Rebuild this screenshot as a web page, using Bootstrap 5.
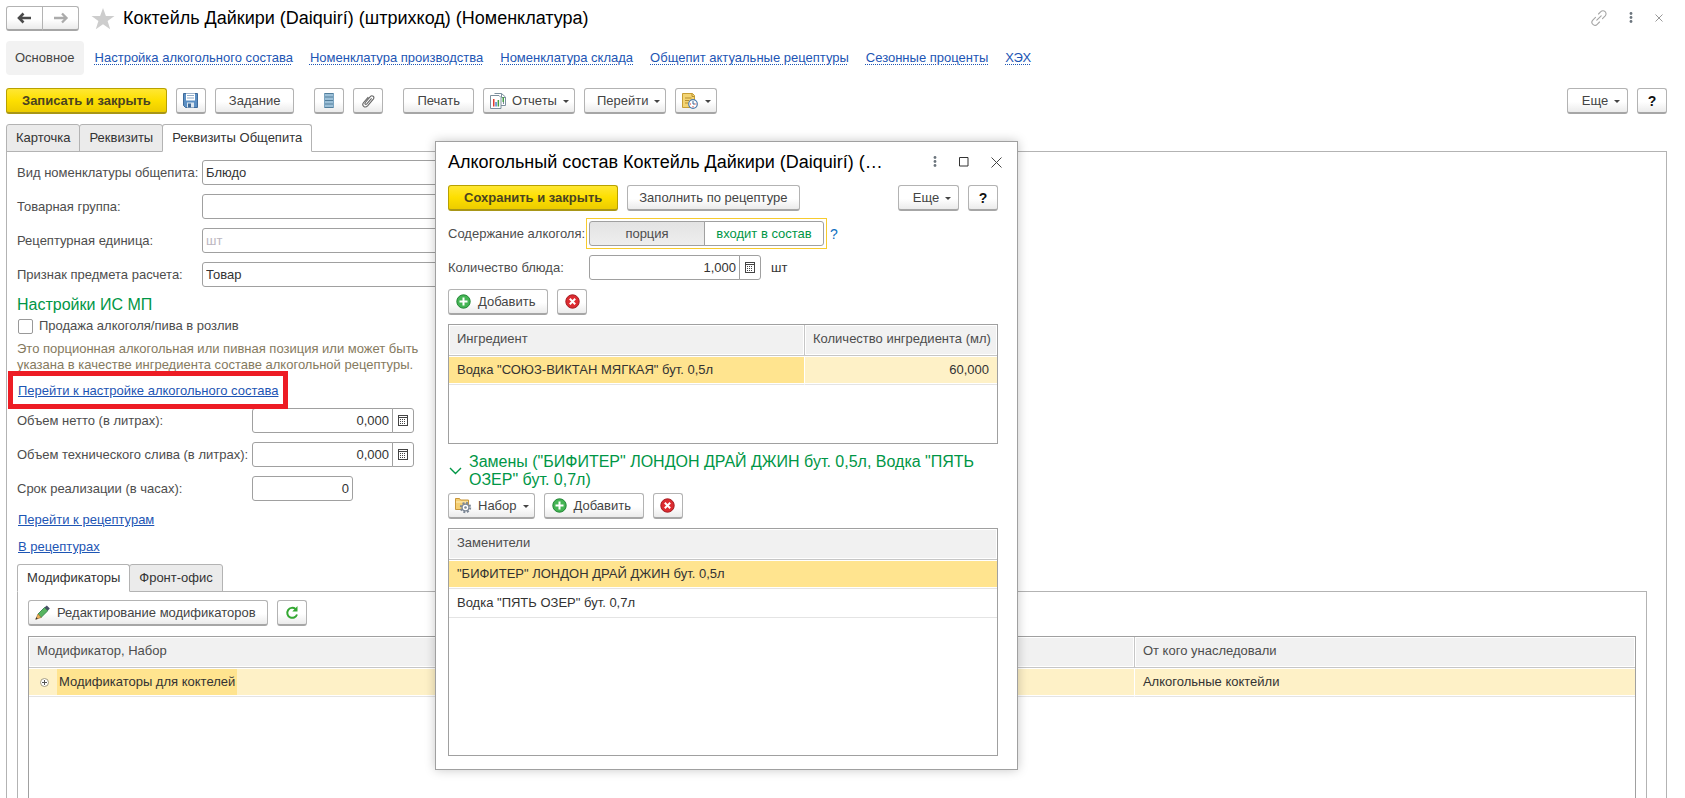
<!DOCTYPE html>
<html lang="ru">
<head>
<meta charset="utf-8">
<meta name="viewport" content="width=device-width, initial-scale=1">
<title>Коктейль Дайкири (Daiquirí) (штрихкод) (Номенклатура)</title>
<link rel="stylesheet" href="https://cdn.jsdelivr.net/npm/bootstrap@5.3.0/dist/css/bootstrap.min.css">
<style>
body{font-family:"Liberation Sans",Arial,sans-serif;font-size:13px;line-height:16px;color:#333;background:#fff}
svg{display:block;flex:none}
.page{height:100vh;padding:6px 18px 0 6px}
.win-title{font-size:18px;line-height:24px;color:#000;font-weight:400}
.win-ctl{gap:22px;margin-right:4px}
a{color:#1d55b4}
/* buttons */
.btn{--bs-btn-font-size:13px;--bs-btn-line-height:16px;--bs-btn-padding-y:0;--bs-btn-padding-x:13px;--bs-btn-border-radius:3px;
  display:inline-flex;align-items:center;justify-content:center;white-space:nowrap;height:26px}
.btn-std{--bs-btn-color:#444;--bs-btn-border-color:#b3b3b3;--bs-btn-hover-color:#222;--bs-btn-hover-border-color:#999;
  background:linear-gradient(#fff 55%,#ebebeb);border-bottom:2px solid #a6a6a6}
.btn-main{--bs-btn-padding-x:15px;--bs-btn-color:#4a4321;--bs-btn-border-color:#b8a100;--bs-btn-hover-color:#333;--bs-btn-hover-border-color:#998600;
  background:linear-gradient(#ffe733,#fddf00 50%,#eccc00);border-bottom:2px solid #a89617;font-weight:700}
.btn-sq{width:30px;padding:0}
.btn-help{font-weight:700;font-size:14px;color:#111}
.btn-menu{padding:0 5px 0 12px;gap:6px}
.btn-menu::after{content:"";margin-top:2px;border:3px solid transparent;border-top-color:#444;border-bottom:0}
.btn-more{width:61px}
.btn-pic{padding-left:6px}
.btn-long{--bs-btn-padding-x:11px}
.btn-edit{padding-left:6px;gap:7px}
.btn-add{padding-left:7px;padding-right:12px;gap:7px}
.btn-gap{margin-left:11px}
.btn-nav{width:37px;height:25px;padding:0}
.btn-bare{height:24px;border:0;background:none;padding:0}
/* navigation links */
.sections{margin-top:10px;gap:17px}
.nav-current{margin-right:-6px;background:#f2f2f2;border-radius:4px;padding:9px;color:#444}
.nav-dotted{text-decoration:underline dotted 1px;text-underline-offset:2px}
/* tool bars */
.toolbar{margin-top:13px;gap:9px}
.tools{gap:9px}
/* tabs */
.nav-tabs{--bs-nav-tabs-border-width:0}
.main-tabs{margin-top:10px}
.nav-tabs .nav-link{height:28px;margin:0 0 -1px -1px;padding:0 9px;font-size:13px;color:#333;background:#ebebeb;border:1px solid #b3b3b3;border-radius:3px 3px 0 0}
.nav-tabs .nav-item:first-child .nav-link{margin-left:0}
.nav-tabs .nav-link.active{color:#333;background:#fff;border-color:#b3b3b3 #b3b3b3 #fff;position:relative}
.pane{border:1px solid #b3b3b3;border-bottom:0;padding:8px 19px 0 10px}
.pane-inner{padding:8px 10px 0}
/* fields */
.form-rows{display:grid;gap:9px 6px;align-items:center}
.rows-kind{grid-template-columns:179px 1fr}
.rows-vol{grid-template-columns:229px 162px}
.rows-dlg{grid-template-columns:135px 1fr}
label,.lbl{color:#4d4d4d;white-space:nowrap}
.form-control{height:25px;padding:0 3px;font-size:13px;line-height:16px;color:#333;border:1px solid #a0a0a0;border-radius:3px}
.form-control::placeholder{color:#bcb6c0}
.btn-calc{width:22px;height:25px;padding:0;border:1px solid #a0a0a0;background:#fff}
.field-short{width:101px}
.field-qty{width:172px}
.qty{gap:10px}
.form-check-input[type=checkbox]{width:15px;height:15px;margin:0;border:1px solid #999;border-radius:2px}
.group-title{font-size:16px;line-height:18px;color:#009646;font-weight:400}
.sec{margin:9px 0 4px}
.sale{gap:6px;height:16px;padding-left:1px}
.hint{margin-top:7px;color:#857a5e}
.links{margin:10px 0 9px;padding-left:1px}
.links-more{margin-top:11px;gap:11px}
.callout{inset:-12px -10px -10px -10px;border:5px solid #ed1c24;pointer-events:none;z-index:1}
/* grids */
.grid-box{border:1px solid #a0a0a0;background:#fff}
.grid-box table{border-collapse:separate;border-spacing:0;table-layout:fixed}
.grid-box th{height:31px;padding:0 8px 2px;font-weight:400;color:#4d4d4d;background:#f1f1f1;border-bottom:1px solid #c6c6c6;box-shadow:inset 0 0 0 1px #fff;white-space:nowrap}
.grid-box th+th{border-left:1px solid #c6c6c6}
.grid-box td{height:29px;padding:0 8px;border-bottom:1px solid #e4e4e4;box-shadow:inset 0 1px #fff,inset 0 -1px #fff}
.grid-box td+td{border-left:1px solid #fff}
.row-sel td{background:#fef1c7}
.row-sel td.cell-cur{background:#ffe48f}
.tree{padding-left:3px;gap:8px}
.tree-text{background:#ffe48f;line-height:26px;padding:0 2px}
.col-from{width:31.2%}
.col-amount{width:193px}
.grid-open{margin-top:10px;border-bottom:0}
.grid-ingr{height:120px}
.grid-swap{margin-top:9px}
/* dialog */
.dlg{left:435px;top:141px;width:583px;height:629px;padding:8px 19px 13px 12px;background:#fff;border:1px solid #a0a0a0;box-shadow:0 0 10px rgba(0,0,0,.22);z-index:5}
.dlg-ctl{gap:22px;margin-right:-4px}
.dlg-bar{margin:11px 0 10px}
.dlg-tools{margin:9px 0}
.switch{width:241px;height:31px;margin:-3px 0 -3px -3px;padding:2px;border:1px solid #f7cb2e;border-radius:0}
.switch .btn{height:25px;border:1px solid #a0a0a0;color:#4d4d4d;background:#fff;padding:0}
.switch .btn-check:checked+.btn{border-color:#a0a0a0;color:#4d4d4d;background:linear-gradient(#e3e3e3,#eee)}
.switch .btn-first{width:116px}
.switch .btn-last{width:120px;color:#009646}
.ask{margin-left:3px;font-size:14px;color:#0f6fc0}
.swaps{margin:9px 0 4px;gap:7px;padding-left:1px}
</style>
</head>
<body>
<!-- shared icons -->
<svg width="0" height="0" class="position-absolute" aria-hidden="true">
  <symbol id="i-calc" viewBox="0 0 10 12"><rect x=".5" y=".5" width="9" height="10" fill="#fff" stroke="#444"/><path d="M1 2.500h8" stroke="#444"/><path d="M2 4.500h6M2 6.500h6M2 8.500h6" stroke="#444" stroke-dasharray="1 1"/></symbol>
  <symbol id="i-add" viewBox="0 0 15 15"><circle cx="7.500" cy="7.500" r="6.700" fill="#44b554" stroke="#228636"/><path d="M7.500 3.500v8M3.500 7.500h8" stroke="#fff" stroke-width="2"/></symbol>
  <symbol id="i-del" viewBox="0 0 15 15"><circle cx="7.500" cy="7.500" r="6.700" fill="#dc2b30" stroke="#a51c22"/><path d="M4.800 4.800l5.400 5.400M10.200 4.800l-5.400 5.400" stroke="#fff" stroke-width="2"/></symbol>
  <symbol id="i-dots" viewBox="0 0 4 12"><g fill="currentColor"><circle cx="2" cy="1.500" r="1.400"/><circle cx="2" cy="5.500" r="1.400"/><circle cx="2" cy="9.500" r="1.400"/></g></symbol>
</svg>

<div class="page position-relative overflow-hidden d-flex flex-column">
  <header class="d-flex align-items-start">
    <div class="btn-group me-2" role="group" aria-label="История">
      <button type="button" class="btn btn-std btn-nav" aria-label="Назад"><svg width="16" height="12" viewBox="0 0 16 12"><path d="M2 6h12M6.500 1.500L2 6l4.500 4.500" fill="none" stroke="#4a4a4a" stroke-width="2.600"/></svg></button>
      <button type="button" class="btn btn-std btn-nav" aria-label="Вперед"><svg width="16" height="12" viewBox="0 0 16 12"><path d="M1 6h12M9 1.500L13.500 6 9 10.500" fill="none" stroke="#ababab" stroke-width="2.300"/></svg></button>
    </div>
    <button type="button" class="btn btn-bare ms-1 me-2" aria-label="В избранное"><svg width="24" height="23" viewBox="0 0 24 23"><path d="M12 1l2.900 8h8.600l-6.900 5 2.600 8.200-7.200-5-7.200 5L7.400 14 .5 9h8.600z" fill="#cdcdcd"/></svg></button>
    <h1 class="win-title mb-0 text-nowrap">Коктейль Дайкири (Daiquirí) (штрихкод) (Номенклатура)</h1>
    <div class="ms-auto d-flex align-items-center win-ctl">
      <button type="button" class="btn btn-bare" aria-label="Ссылка"><svg width="16" height="16" viewBox="0 0 16 16"><g fill="none" stroke="#a5a5a5" stroke-width="1.100" stroke-linecap="round"><path d="M7.500 4L9.800 1.700a2.900 2.900 0 0 1 4.400 4.200L11.500 8.600M8.500 12l-2.300 2.300A2.900 2.900 0 0 1 1.800 10.100L4.500 7.400M5.800 10.200l4.400-4.400"/></g></svg></button>
      <button type="button" class="btn btn-bare text-secondary" aria-label="Действия"><svg width="4" height="12"><use href="#i-dots"/></svg></button>
      <button type="button" class="btn btn-bare" aria-label="Закрыть"><svg width="8" height="8" viewBox="0 0 8 8"><path d="M.5.5l7 7M7.500.5l-7 7" stroke="#999"/></svg></button>
    </div>
  </header>

  <nav class="d-flex align-items-center text-nowrap sections">
    <span class="nav-current">Основное</span>
    <a class="nav-dotted" href="#">Настройка алкогольного состава</a>
    <a class="nav-dotted" href="#">Номенклатура производства</a>
    <a class="nav-dotted" href="#">Номенклатура склада</a>
    <a class="nav-dotted" href="#">Общепит актуальные рецептуры</a>
    <a class="nav-dotted" href="#">Сезонные проценты</a>
    <a class="nav-dotted" href="#">ХЭХ</a>
  </nav>

  <div class="d-flex toolbar" role="toolbar">
    <button type="button" class="btn btn-main">Записать и закрыть</button>
    <button type="button" class="btn btn-std btn-sq" aria-label="Записать"><svg width="15" height="15" viewBox="0 0 15 15"><path d="M.5.5h14v14H2.500l-2-2z" fill="#5b8fc4" stroke="#3f6a99"/><path d="M3 .5h9v7H3z" fill="#fff"/><path d="M4 2.500h7M4 5h7" stroke="#91abc6"/><path d="M4 9.500h7v5H4z" fill="#dce6ef"/><path d="M5 10.500h3v4H5z" fill="#3f6a99"/></svg></button>
    <button type="button" class="btn btn-std">Задание</button>
    <button type="button" class="btn btn-std btn-sq btn-gap" aria-label="Список"><svg width="10" height="15" viewBox="0 0 10 15"><path d="M0 0h10v15H0z" fill="#9cc0d8"/><path d="M0 .5h10M0 4h10M0 7.500h10M0 11h10M0 14.500h10" stroke="#537e9b" stroke-width="1.200"/><path d="M.5 0v15M9.500 0v15" stroke="#7ba4c0"/></svg></button>
    <button type="button" class="btn btn-std btn-sq" aria-label="Файлы"><svg width="13" height="14" viewBox="0 0 13 14"><path d="M9.600 4.300L4.800 9.800c-1.200 1.200-2.500-.1-1.500-1.300l5-5.800c1.900-2.100 4.700.2 3 2.400l-5.700 6.700c-2.700 2.900-6.400-.3-4-3.300l4.700-5.400" fill="none" stroke="#666" stroke-width="1.100"/></svg></button>
    <button type="button" class="btn btn-std btn-gap">Печать</button>
    <button type="button" class="btn btn-std btn-menu btn-pic"><svg width="16" height="16" viewBox="0 0 16 16"><path d="M4.500.5h7l4 3.500v8.500H11" fill="#fff" stroke="#7c8f9d"/><path d="M11.500.5v4h4M13.500 6v5" fill="none" stroke="#7c8f9d"/><path d="M.5 2.500h8.500l2 2v11H.5z" fill="#fff" stroke="#7c8f9d"/><path d="M3 6h1.500v7.500H3z" fill="#e03b2f"/><path d="M5.300 9h1.500v4.500H5.300z" fill="#4a86c9"/><path d="M7.600 7h1.500v6.500H7.600zM12.500 4H14v5h-1.500z" fill="#46a046"/></svg>Отчеты</button>
    <button type="button" class="btn btn-std btn-menu">Перейти</button>
    <button type="button" class="btn btn-std btn-menu btn-pic" aria-label="Задачи"><svg width="17" height="16" viewBox="0 0 17 16"><path d="M.5.5h10l2 2v12H.5z" fill="#f3d474" stroke="#c79e35"/><path d="M10 .5v3h2.500M3 5h6.500M3 7.500h4M3 10h3" fill="none" stroke="#b78f2c"/><circle cx="11" cy="11" r="4.300" fill="#fff" stroke="#4e7cae" stroke-width="1.200"/><path d="M11 8v3h2" fill="none" stroke="#3b6596"/><path d="M8 11h1M11 13.200v1M13.300 11h1" stroke="#e2392e" stroke-width="1.200"/></svg></button>
    <button type="button" class="btn btn-std btn-menu btn-more ms-auto">Еще</button>
    <button type="button" class="btn btn-std btn-sq btn-help" aria-label="Справка">?</button>
  </div>

  <ul class="nav nav-tabs main-tabs">
    <li class="nav-item"><button type="button" class="nav-link">Карточка</button></li>
    <li class="nav-item"><button type="button" class="nav-link">Реквизиты</button></li>
    <li class="nav-item"><button type="button" class="nav-link active">Реквизиты Общепита</button></li>
  </ul>

  <main class="pane flex-grow-1 d-flex flex-column">
    <div class="form-rows rows-kind col-6">
      <label for="kind">Вид номенклатуры общепита:</label><input id="kind" class="form-control" value="Блюдо">
      <label for="grp">Товарная группа:</label><input id="grp" class="form-control">
      <label for="unit">Рецептурная единица:</label><input id="unit" class="form-control" placeholder="шт">
      <label for="sign">Признак предмета расчета:</label><input id="sign" class="form-control" value="Товар">
    </div>

    <h2 class="group-title sec">Настройки ИС МП</h2>
    <div class="d-flex align-items-center sale">
      <input type="checkbox" id="draft" class="form-check-input">
      <label for="draft">Продажа алкоголя/пива в розлив</label>
    </div>
    <div class="hint">Это порционная алкогольная или пивная позиция или может быть<br>указана в качестве ингредиента составе алкогольной рецептуры.</div>
    <div class="links d-flex">
      <span class="position-relative"><a href="#">Перейти к настройке алкогольного состава</a><span class="callout position-absolute"></span></span>
    </div>

    <div class="form-rows rows-vol">
      <label for="net">Объем нетто (в литрах):</label>
      <div class="input-group"><input id="net" class="form-control text-end" value="0,000"><button type="button" class="btn btn-calc" aria-label="Калькулятор"><svg width="10" height="12"><use href="#i-calc"/></svg></button></div>
      <label for="loss">Объем технического слива (в литрах):</label>
      <div class="input-group"><input id="loss" class="form-control text-end" value="0,000"><button type="button" class="btn btn-calc" aria-label="Калькулятор"><svg width="10" height="12"><use href="#i-calc"/></svg></button></div>
      <label for="hours">Срок реализации (в часах):</label>
      <input id="hours" class="form-control text-end field-short" value="0">
    </div>
    <div class="links links-more d-flex flex-column align-items-start"><a href="#">Перейти к рецептурам</a><a href="#">В рецептурах</a></div>

    <ul class="nav nav-tabs">
      <li class="nav-item"><button type="button" class="nav-link active">Модификаторы</button></li>
      <li class="nav-item"><button type="button" class="nav-link">Фронт-офис</button></li>
    </ul>
    <section class="pane pane-inner flex-grow-1 d-flex flex-column">
      <div class="d-flex tools">
        <button type="button" class="btn btn-std btn-long btn-edit"><svg width="15" height="15" viewBox="0 0 15 15"><path d="M3 9l6.500-6.500 3.300 3.300L6 12.500z" fill="#57b560" stroke="#2d7a45" stroke-width=".8"/><path d="M9.500 2.500L11.800.4l3 3-2 2.400z" fill="#475066"/><path d="M3 9l3 3.500L.8 14.300z" fill="#f0b65a" stroke="#a37433" stroke-width=".7"/><path d="M.5 14.500l.8-2.300 1.500 1.500z" fill="#333"/></svg>Редактирование модификаторов</button>
        <button type="button" class="btn btn-std btn-sq" aria-label="Обновить"><svg width="14" height="14" viewBox="0 0 14 14"><path d="M10.500 3A5 5 0 1 0 12 8.500" fill="none" stroke="#34a832" stroke-width="2"/><path d="M12.500 0v5.500H7.300z" fill="#34a832"/></svg></button>
      </div>
      <div class="grid-box grid-open flex-grow-1">
        <table class="w-100">
          <thead><tr><th>Модификатор, Набор</th><th class="col-from">От кого унаследовали</th></tr></thead>
          <tbody><tr class="row-sel"><td><span class="d-flex align-items-center tree"><svg width="9" height="9" viewBox="0 0 9 9"><circle cx="4.500" cy="4.500" r="4" fill="#fff" stroke="#a39b80"/><path d="M2 4.500h5M4.500 2v5" stroke="#555"/></svg><span class="tree-text">Модификаторы для коктелей</span></span></td><td>Алкогольные коктейли</td></tr></tbody>
        </table>
      </div>
    </section>
  </main>

  <section class="dlg position-absolute d-flex flex-column" role="dialog" aria-labelledby="dlgTitle">
    <div class="d-flex align-items-center">
      <h2 class="win-title mb-0 text-nowrap me-auto" id="dlgTitle">Алкогольный состав Коктейль Дайкири (Daiquirí) (…</h2>
      <div class="d-flex align-items-center dlg-ctl">
        <button type="button" class="btn btn-bare text-secondary" aria-label="Действия"><svg width="4" height="12"><use href="#i-dots"/></svg></button>
        <button type="button" class="btn btn-bare" aria-label="Развернуть"><svg width="10" height="10" viewBox="0 0 10 10"><path d="M.5.5h8.500v8.500H.5z" fill="none" stroke="#333"/></svg></button>
        <button type="button" class="btn btn-bare" aria-label="Закрыть"><svg width="11" height="11" viewBox="0 0 11 11"><path d="M.5.5l10 10M10.500.5l-10 10" stroke="#444"/></svg></button>
      </div>
    </div>
    <div class="d-flex tools dlg-bar">
      <button type="button" class="btn btn-main">Сохранить и закрыть</button>
      <button type="button" class="btn btn-std btn-long">Заполнить по рецептуре</button>
      <button type="button" class="btn btn-std btn-menu btn-more ms-auto">Еще</button>
      <button type="button" class="btn btn-std btn-sq btn-help" aria-label="Справка">?</button>
    </div>
    <div class="form-rows rows-dlg">
      <span id="swLabel" class="lbl">Содержание алкоголя:</span>
      <div class="d-flex align-items-center">
        <div class="btn-group switch" role="group" aria-labelledby="swLabel">
          <input type="radio" class="btn-check" name="sw" id="sw1" checked><label class="btn btn-first" for="sw1">порция</label>
          <input type="radio" class="btn-check" name="sw" id="sw2"><label class="btn btn-last" for="sw2">входит в состав</label>
        </div>
        <a href="#" class="ask text-decoration-none" aria-label="Подсказка">?</a>
      </div>
      <label for="qty">Количество блюда:</label>
      <div class="d-flex align-items-center qty">
        <div class="input-group field-qty"><input id="qty" class="form-control text-end" value="1,000"><button type="button" class="btn btn-calc" aria-label="Калькулятор"><svg width="10" height="12"><use href="#i-calc"/></svg></button></div>
        <span>шт</span>
      </div>
    </div>
    <div class="d-flex tools dlg-tools">
      <button type="button" class="btn btn-std btn-add"><svg width="15" height="15"><use href="#i-add"/></svg>Добавить</button>
      <button type="button" class="btn btn-std btn-sq" aria-label="Удалить"><svg width="15" height="15"><use href="#i-del"/></svg></button>
    </div>
    <div class="grid-box grid-ingr">
      <table class="w-100">
        <thead><tr><th>Ингредиент</th><th class="col-amount">Количество ингредиента (мл)</th></tr></thead>
        <tbody><tr class="row-sel"><td class="cell-cur">Водка "СОЮЗ-ВИКТАН МЯГКАЯ" бут. 0,5л</td><td class="text-end">60,000</td></tr></tbody>
      </table>
    </div>
    <h3 class="group-title d-flex align-items-center swaps">
      <svg width="13" height="8" viewBox="0 0 13 8"><path d="M1 1l5.500 5.500L12 1" fill="none" stroke="#009646" stroke-width="1.400"/></svg>
      <span>Замены ("БИФИТЕР" ЛОНДОН ДРАЙ ДЖИН бут. 0,5л, Водка "ПЯТЬ ОЗЕР" бут. 0,7л)</span>
    </h3>
    <div class="d-flex tools">
      <button type="button" class="btn btn-std btn-menu btn-pic"><svg width="17" height="17" viewBox="0 0 17 17"><path d="M.5 1.500h4l1 1.500h8v9.500H.5z" fill="#f5cf72" stroke="#c8963a"/><path d="M1 5h12" stroke="#fff0bf"/><circle cx="10.500" cy="10.500" r="4.700" fill="none" stroke="#7d8896" stroke-width="2" stroke-dasharray="2 1.700"/><circle cx="10.500" cy="10.500" r="3.400" fill="#fff" stroke="#7d8896" stroke-width="1.200"/><circle cx="10.500" cy="10.500" r="1.300" fill="#7d8896"/></svg>Набор</button>
      <button type="button" class="btn btn-std btn-add"><svg width="15" height="15"><use href="#i-add"/></svg>Добавить</button>
      <button type="button" class="btn btn-std btn-sq" aria-label="Удалить"><svg width="15" height="15"><use href="#i-del"/></svg></button>
    </div>
    <div class="grid-box grid-swap flex-grow-1">
      <table class="w-100">
        <thead><tr><th>Заменители</th></tr></thead>
        <tbody><tr class="row-sel"><td class="cell-cur">"БИФИТЕР" ЛОНДОН ДРАЙ ДЖИН бут. 0,5л</td></tr><tr><td>Водка "ПЯТЬ ОЗЕР" бут. 0,7л</td></tr></tbody>
      </table>
    </div>
  </section>
</div>
<script src="https://cdn.jsdelivr.net/npm/bootstrap@5.3.0/dist/js/bootstrap.bundle.min.js"></script>
</body>
</html>
